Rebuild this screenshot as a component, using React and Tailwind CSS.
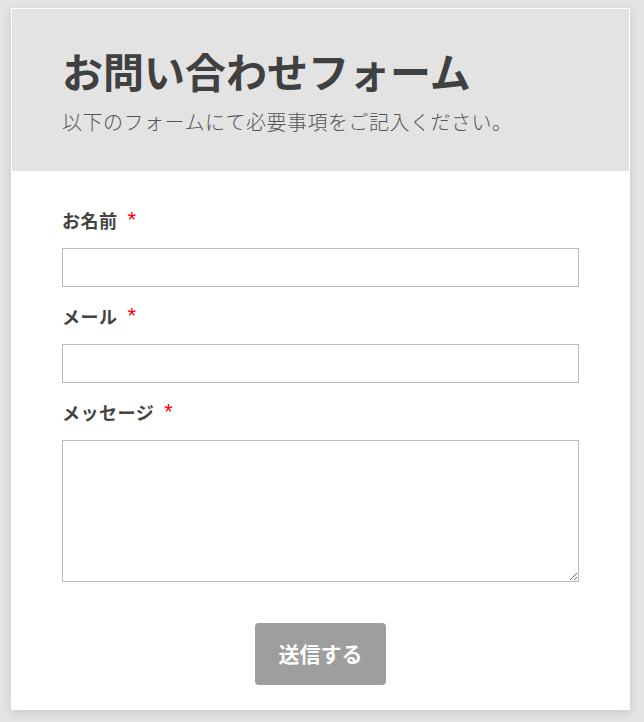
const Field = ({ label, children }) => (
    <div className="mb-[16px]">
        <label className="mb-[15px] flex items-center text-[18px] font-bold leading-[26px] tracking-[0.5px] text-[#444]">
            {label}
            <span
                className="ml-[10px] text-[22px] font-normal leading-[26px] text-[#ff0000]"
                style={{ fontFamily: '"Liberation Sans", sans-serif' }}
            >
                *
            </span>
        </label>
        {children}
    </div>
);

const App = () => {
    return (
        <div
            className="min-h-[722px] bg-[#e5e4e2] pl-[11px] pt-[8px]"
            style={{ fontFamily: '"Noto Sans CJK JP", "Noto Sans", sans-serif' }}
        >
            <div className="w-[619px] border border-white bg-white shadow-[0_3px_10px_rgba(0,0,0,0.12)]">
                <div className="h-[162px] bg-[#e3e3e3] px-[50px] pt-[31px]">
                    <h1 className="text-[41px] font-bold leading-[60px] text-[#404040]">お問い合わせフォーム</h1>
                    <p className="mt-[7px] text-[20px] font-light leading-[30px] tracking-[0.5px] text-[#555]">
                        以下のフォームにて必要事項をご記入ください。
                    </p>
                </div>

                <form className="px-[50px] pb-[24px] pt-[36px]">
                    <Field label="お名前">
                        <input type="text" className="block h-[39px] w-full border border-[#bbb] bg-white px-2 outline-none" />
                    </Field>
                    <Field label="メール">
                        <input type="email" className="block h-[39px] w-full border border-[#bbb] bg-white px-2 outline-none" />
                    </Field>
                    <Field label="メッセージ">
                        <textarea className="block h-[142px] w-full border border-[#bbb] bg-white px-2 outline-none" />
                    </Field>

                    <div className="flex justify-center pt-[25px]">
                        <button
                            type="button"
                            className="h-[62px] w-[131px] rounded-[4px] bg-[#9e9e9e] text-[21px] font-bold text-white"
                        >
                            送信する
                        </button>
                    </div>
                </form>
            </div>
        </div>
    );
};

export default App;
